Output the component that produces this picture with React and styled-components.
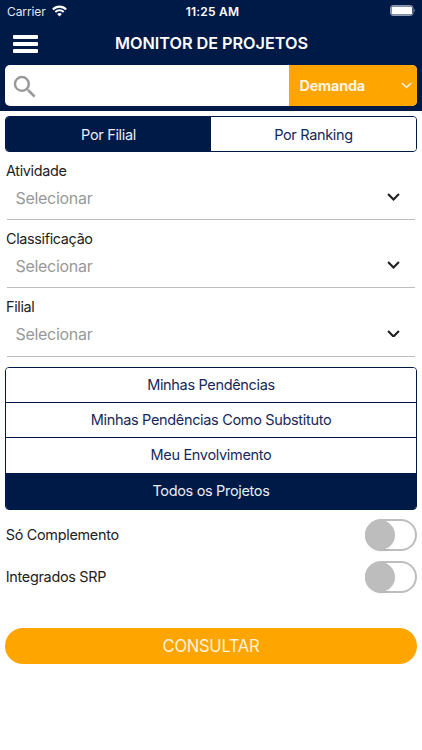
import React from "react";
import styled, { createGlobalStyle } from "styled-components";

const navy = "#001a48";
const orange = "#ffa500";

const GlobalStyle = createGlobalStyle`
  * { box-sizing: border-box; }
  body { margin: 0; background: #fff; font-family: Inter, "Liberation Sans", sans-serif; }
  button { font-family: inherit; margin: 0; padding: 0; }
`;

const Screen = styled.div`
  width: 422px;
  height: 750px;
  overflow: hidden;
  background: #fff;
`;

const Header = styled.header`
  height: 111px;
  background: ${navy};
  color: #fff;
`;

const StatusBar = styled.div`
  height: 22px;
  padding: 0 6px 0 7px;
  display: grid;
  grid-template-columns: 1fr auto 1fr;
  align-items: center;
`;

const Carrier = styled.div`
  display: flex;
  align-items: center;
  gap: 6px;
  font-size: 12px;
  letter-spacing: -0.1px;
  color: #e3e7ef;
`;

const Clock = styled.div`
  font-size: 12px;
  font-weight: 600;
  letter-spacing: 0.22px;
  padding-left: 2px;
`;

const BatteryIcon = styled.svg`
  justify-self: end;
  margin-top: -1px;
`;

const TitleBar = styled.div`
  height: 43px;
  padding: 0 13px;
  display: grid;
  grid-template-columns: 26px 1fr 26px;
  align-items: center;
`;

const MenuButton = styled.button`
  height: 18px;
  width: 25px;
  border: 0;
  background: none;
  display: flex;
  flex-direction: column;
  justify-content: space-between;
`;

const MenuLine = styled.span`
  height: 4px;
  width: 100%;
  background: #fff;
  border-radius: 1px;
`;

const Title = styled.h1`
  margin: 0;
  padding: 0 0 2px 1px;
  font-size: 16.3px;
  font-weight: 600;
  letter-spacing: -0.05px;
  text-align: center;
  white-space: nowrap;
`;

const SearchBar = styled.div`
  height: 41px;
  margin: 0 5px;
  display: flex;
  border-radius: 5px;
  overflow: hidden;
  background: #fff;
`;

const SearchField = styled.div`
  flex: 1;
  display: flex;
  align-items: center;
  padding: 3px 0 0 5px;
`;

const ScopeSelect = styled.button`
  width: 128px;
  border: 0;
  background: ${orange};
  color: #fff6e4;
  display: flex;
  align-items: center;
  justify-content: space-between;
  padding: 0 5px 0 10.5px;
  font-size: 14.4px;
  font-weight: 700;
  letter-spacing: -0.2px;
`;

const Content = styled.main`
  padding: 5px 5px 0;
`;

const Segments = styled.div`
  height: 36px;
  width: 412px;
  display: grid;
  grid-template-columns: 1fr 1fr;
  border: 1px solid ${navy};
  border-radius: 4px;
  overflow: hidden;
`;

const Option = styled.button`
  border: 0;
  font-size: 14.5px;
  letter-spacing: -0.33px;
  color: ${(p) => (p.$active ? "#e9edf5" : "#14295a")};
  background: ${(p) => (p.$active ? navy : "#fff")};
`;

const Field = styled.div`
  height: 68.3px;
  display: flex;
  flex-direction: column;
  color: #222;
`;

const FieldLabel = styled.div`
  height: 27px;
  padding: 0 0 1px 1px;
  display: flex;
  align-items: center;
  font-size: 14.4px;
  letter-spacing: -0.34px;
`;

const Fields = styled.div`
  padding-top: 5px;
`;

const Select = styled.div`
  height: 36px;
  margin: 0 2px;
  padding: 0 15px 8px 8.5px;
  display: flex;
  align-items: center;
  justify-content: space-between;
  border-bottom: 1px solid #bdbdbd;
  font-size: 16px;
  letter-spacing: -0.3px;
  color: #999;

  svg {
    margin-top: -1px;
  }
`;

const OptionList = styled.div`
  height: 143px;
  width: 412px;
  margin-top: 4.7px;
  display: grid;
  grid-template-rows: 35px 35px 36px 35px;
  border: 1px solid ${navy};
  border-radius: 4px;
  overflow: hidden;

  ${Option} {
    padding-bottom: 1px;
    border-bottom: 1px solid ${navy};
  }
`;

const Toggles = styled.div`
  padding-top: 9.4px;
`;

const ToggleRow = styled.div`
  height: 42px;
  width: 412px;
  display: flex;
  align-items: flex-start;
  justify-content: space-between;
`;

const ToggleLabel = styled.span`
  padding-left: 0.7px;
  line-height: 31px;
  font-size: 14.4px;
  letter-spacing: -0.28px;
  color: #222;
`;

const Switch = styled.button`
  width: 52px;
  height: 32px;
  border: 2px solid #bdbdbd;
  border-radius: 16px;
  background: #fff;
  display: flex;
  align-items: center;
`;

const Knob = styled.span`
  width: 30px;
  height: 30px;
  margin-left: -2px;
  border-radius: 50%;
  background: #bdbdbd;
  box-shadow: 0 2px 2px rgba(0, 0, 0, 0.04);
`;

const Submit = styled.button`
  width: 412px;
  height: 36px;
  margin-top: 25px;
  border: 0;
  border-radius: 18px;
  background: ${orange};
  color: #fff3dc;
  font-size: 16.6px;
  letter-spacing: -0.3px;
`;

const Chevron = ({ size, width, color }) => (
  <svg width={size} height={size * 0.6} viewBox="0 0 12 7.2" fill="none" stroke={color} strokeWidth={width}>
    <path d="M1 1 L6 6 L11 1" />
  </svg>
);

const WifiIcon = () => (
  <svg width="15" height="12" viewBox="0 0 14 11" fill="none" stroke="#fff" strokeWidth="1.9">
    <path d="M0.8 4.1 C4.3 0.5 9.7 0.5 13.2 4.1" />
    <path d="M3.1 6.5 C5.3 4.3 8.7 4.3 10.9 6.5" />
    <path d="M7 10.6 L4.8 8.3 Q7 6.4 9.2 8.3 Z" fill="#fff" stroke="none" />
  </svg>
);

const SearchIcon = () => (
  <svg width="30" height="30" viewBox="0 0 24 24" fill="#999">
    <path d="M15.5 14h-.79l-.28-.27A6.471 6.471 0 0 0 16 9.5 6.5 6.5 0 1 0 9.5 16c1.61 0 3.09-.59 4.23-1.57l.27.28v.79l5 4.99L20.49 19l-4.99-5zm-6 0C7.01 14 5 11.99 5 9.5S7.01 5 9.5 5 14 7.01 14 9.5 11.99 14 9.5 14z" />
  </svg>
);

const fields = ["Atividade", "Classificação", "Filial"];
const options = ["Minhas Pendências", "Minhas Pendências Como Substituto", "Meu Envolvimento", "Todos os Projetos"];
const toggles = ["Só Complemento", "Integrados SRP"];

export default function App() {
  return (
    <Screen>
      <GlobalStyle />
      <Header>
        <StatusBar>
          <Carrier>
            Carrier
            <WifiIcon />
          </Carrier>
          <Clock>11:25 AM</Clock>
          <BatteryIcon width="26" height="11" viewBox="0 0 26 11">
            <rect x="0.5" y="0.5" width="22.5" height="10" rx="2.5" fill="none" stroke="#8c99b3" />
            <rect x="1.5" y="1.5" width="20.5" height="8" rx="1.2" fill="#fff" />
            <path d="M24.2 3.8 Q25.8 5.5 24.2 7.2 Z" fill="#8c99b3" />
          </BatteryIcon>
        </StatusBar>
        <TitleBar>
          <MenuButton aria-label="Menu">
            <MenuLine />
            <MenuLine />
            <MenuLine />
          </MenuButton>
          <Title>MONITOR DE PROJETOS</Title>
        </TitleBar>
        <SearchBar>
          <SearchField>
            <SearchIcon />
          </SearchField>
          <ScopeSelect>
            Demanda
            <Chevron size={11} width={1.6} color="#fff6e4" />
          </ScopeSelect>
        </SearchBar>
      </Header>
      <Content>
        <Segments>
          <Option $active>Por Filial</Option>
          <Option>Por Ranking</Option>
        </Segments>
        <Fields>
          {fields.map((label) => (
            <Field key={label}>
              <FieldLabel>{label}</FieldLabel>
              <Select>
                Selecionar
                <Chevron size={13} width={2} color="#222" />
              </Select>
            </Field>
          ))}
        </Fields>
        <OptionList>
          {options.map((label, i) => (
            <Option key={label} $active={i === 3}>
              {label}
            </Option>
          ))}
        </OptionList>
        <Toggles>
          {toggles.map((label) => (
            <ToggleRow key={label}>
              <ToggleLabel>{label}</ToggleLabel>
              <Switch role="switch" aria-checked="false" aria-label={label}>
                <Knob />
              </Switch>
            </ToggleRow>
          ))}
        </Toggles>
        <Submit>CONSULTAR</Submit>
      </Content>
    </Screen>
  );
}
